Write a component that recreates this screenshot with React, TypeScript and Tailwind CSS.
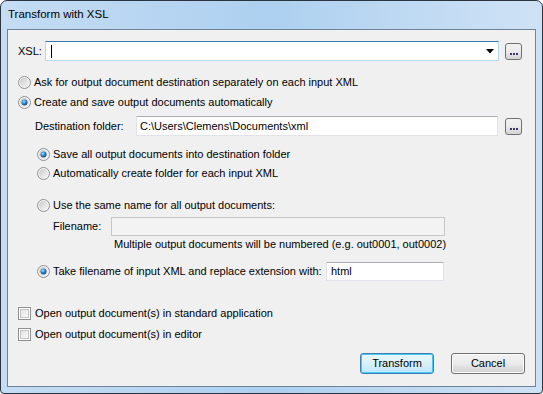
import type { ReactNode } from 'react';

const font = { fontFamily: '"Liberation Sans", Arial, sans-serif' };

function Radio({ checked }: { checked?: boolean }) {
    return (
        <svg width="13" height="13" viewBox="0 0 13 13" className="shrink-0">
            <defs>
                <linearGradient id="rb" x1="0" y1="0" x2="1" y2="1">
                    <stop offset="0" stopColor="#c9c9c9" />
                    <stop offset="1" stopColor="#f7f7f7" />
                </linearGradient>
                <radialGradient id="rdot" cx="0.4" cy="0.35" r="0.7">
                    <stop offset="0" stopColor="#c6e6fa" />
                    <stop offset="0.45" stopColor="#2f8ad0" />
                    <stop offset="1" stopColor="#15406a" />
                </radialGradient>
            </defs>
            <circle cx="6.5" cy="6.5" r="6" fill="#f4f4f4" stroke="#8e8f8f" strokeWidth="1" />
            <circle cx="6.5" cy="6.5" r="4.5" fill="url(#rb)" />
            {checked && <circle cx="6.5" cy="6.5" r="3" fill="url(#rdot)" />}
        </svg>
    );
}

function Check() {
    return (
        <span className="box-border flex h-[13px] w-[13px] shrink-0 border border-[#8e8f8f] bg-white p-px">
            <span className="block h-full w-full border border-[#c4c4c4] bg-gradient-to-br from-[#e2e2e2] to-[#fbfbfb]" />
        </span>
    );
}

function Browse() {
    return (
        <div className="box-border flex h-[17px] w-[17px] shrink-0 items-end justify-center gap-[1px] rounded-[3px] border border-[#707070] bg-gradient-to-b from-[#f2f2f2] via-[#ebebeb] to-[#d4d4d4] pb-[4px]">
            <span className="h-[2px] w-[2px] bg-[#3a3a6a]" />
            <span className="h-[2px] w-[2px] bg-[#3a3a6a]" />
            <span className="h-[2px] w-[2px] bg-[#3a3a6a]" />
        </div>
    );
}

function Row({ h, mt, ml, children }: { h: number; mt: number; ml: number; children: ReactNode }) {
    return (
        <div className="flex items-center" style={{ height: h, marginTop: mt, marginLeft: ml }}>
            {children}
        </div>
    );
}

function Button({ label, primary }: { label: string; primary?: boolean }) {
    return (
        <div
            className={
                'box-border flex h-[21px] w-[74px] items-center justify-center rounded-[3px] border text-[11px] text-black ' +
                (primary
                    ? 'border-[#3c7fb1] bg-gradient-to-b from-[#eaf6fd] via-[#d9f0fc] to-[#bee6fd] shadow-[inset_0_0_0_1px_#48c9f4]'
                    : 'border-[#707070] bg-gradient-to-b from-[#f2f2f2] via-[#ebebeb] to-[#cfcfcf] shadow-[inset_0_0_0_1px_#fcfcfc]')
            }
        >
            {label}
        </div>
    );
}

export default function App() {
    return (
        <div className="h-[394px] w-[543px] bg-white" style={font}>
            <div className="box-border flex h-[394px] w-[543px] flex-col overflow-hidden rounded-t-[7px] rounded-b-[4px] border border-[#2c3440] bg-gradient-to-r from-[#c4dcf4] via-[#add0f0] to-[#cfe2f5]">
                <div className="flex h-[28px] shrink-0 items-center pl-[7px] text-[11.5px] text-black">
                    Transform with XSL
                </div>
                <div className="flex-1 px-[6px] pb-[6px]">
                    <div className="box-border flex h-[358px] flex-col border border-[#6f8397] bg-[#f0f0f0] text-[11px] text-black">
                        <Row h={20} mt={11} ml={10}>
                            <span className="w-[27px]">XSL:</span>
                            <div className="relative box-border flex h-[20px] w-[454px] items-center border border-[#3d7bad] border-b-[#b7d9ed] border-r-[#b7d9ed] border-l-[#b7d9ed] bg-white pl-[5px]">
                                <span className="h-[13px] w-px bg-black" />
                                <svg width="8" height="5" viewBox="0 0 8 5" className="absolute right-[4px] top-[7px]">
                                    <path d="M0 0h8L4 4.5z" fill="#000" />
                                </svg>
                            </div>
                            <div className="ml-[6px]">
                                <Browse />
                            </div>
                        </Row>
                        <Row h={16} mt={13} ml={10}>
                            <Radio />
                            <span className="ml-[3px]">Ask for output document destination separately on each input XML</span>
                        </Row>
                        <Row h={16} mt={4} ml={10}>
                            <Radio checked />
                            <span className="ml-[3px]">Create and save output documents automatically</span>
                        </Row>
                        <Row h={20} mt={6} ml={27}>
                            <span className="w-[101px]">Destination folder:</span>
                            <div className="box-border flex h-[20px] w-[362px] items-center border border-[#e2e3ea] border-t-[#abadb3] bg-white pl-[3px]">
                                C:\Users\Clemens\Documents\xml
                            </div>
                            <div className="ml-[7px]">
                                <Browse />
                            </div>
                        </Row>
                        <Row h={16} mt={10} ml={29}>
                            <Radio checked />
                            <span className="ml-[3px]">Save all output documents into destination folder</span>
                        </Row>
                        <Row h={16} mt={3} ml={29}>
                            <Radio />
                            <span className="ml-[3px]">Automatically create folder for each input XML</span>
                        </Row>
                        <Row h={16} mt={16} ml={29}>
                            <Radio />
                            <span className="ml-[3px]">Use the same name for all output documents:</span>
                        </Row>
                        <Row h={19} mt={4} ml={45}>
                            <span className="w-[58px]">Filename:</span>
                            <div className="box-border h-[19px] w-[334px] border border-[#c5c5c5] bg-[#f3f3f3]" />
                        </Row>
                        <Row h={16} mt={0} ml={106}>
                            <span>Multiple output documents will be numbered (e.g. out0001, out0002)</span>
                        </Row>
                        <Row h={19} mt={10} ml={29}>
                            <Radio checked />
                            <span className="ml-[3px] w-[273px]">Take filename of input XML and replace extension with:</span>
                            <div className="box-border flex h-[19px] w-[118px] items-center border border-[#e2e3ea] border-t-[#abadb3] bg-white pl-[4px]">
                                html
                            </div>
                        </Row>
                        <Row h={16} mt={24} ml={10}>
                            <Check />
                            <span className="ml-[4px]">Open output document(s) in standard application</span>
                        </Row>
                        <Row h={16} mt={5} ml={10}>
                            <Check />
                            <span className="ml-[4px]">Open output document(s) in editor</span>
                        </Row>
                        <div className="mt-[11px] flex justify-end gap-[17px] pr-[10px]">
                            <Button label="Transform" primary />
                            <Button label="Cancel" />
                        </div>
                    </div>
                </div>
            </div>
        </div>
    );
}
